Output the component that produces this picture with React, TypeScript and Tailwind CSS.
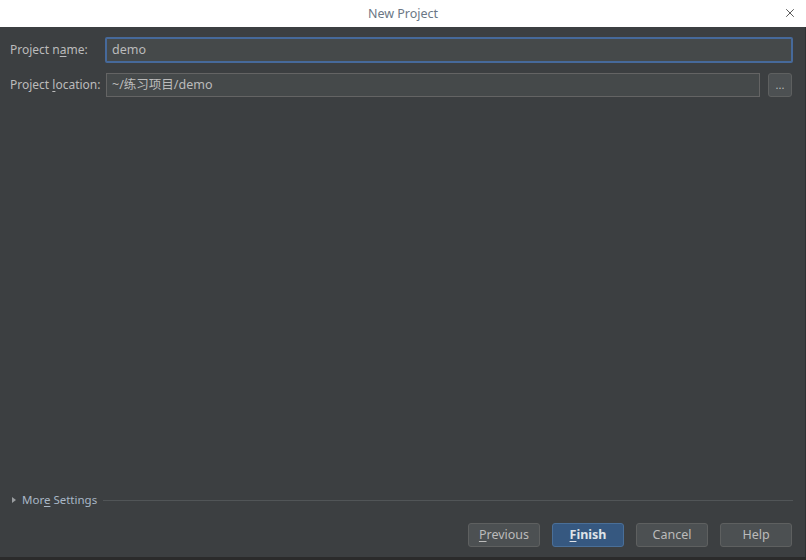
import { X } from 'lucide-react';

const font = { fontFamily: '"Noto Sans", "Noto Sans CJK SC", sans-serif' };

const DialogButton = ({ label, mnemonic, primary }: { label: string; mnemonic?: number; primary?: boolean }) => {
  const text =
    mnemonic === undefined ? (
      label
    ) : (
      <>
        {label.slice(0, mnemonic)}
        <span className="underline underline-offset-2">{label[mnemonic]}</span>
        {label.slice(mnemonic + 1)}
      </>
    );
  return (
    <button
      className={`w-[72px] h-[24px] rounded-[3px] border text-[12.5px] leading-none ${
        primary
          ? 'bg-[#365880] border-[#4a6f98] text-[#dfe3e8] font-bold'
          : 'bg-[#4c5052] border-[#5e6060] text-[#bbbbbb]'
      }`}
    >
      {text}
    </button>
  );
};

export default function App() {
  return (
    <div className="w-[806px] h-[560px] flex flex-col bg-[#3c3f41] overflow-hidden" style={font}>
      {/* Title bar */}
      <div className="h-[27px] bg-white flex items-center relative shrink-0">
        <span className="flex-1 text-center text-[12.5px] text-[#6b7785] pt-[1px]">New Project</span>
        <X size={14} strokeWidth={1.5} className="absolute right-[9px] top-[6px] text-[#444]" />
      </div>

      {/* Body */}
      <div className="flex-1 flex flex-col px-[10px] pt-[10px] pb-[10px] border-r border-[#2f3133]">
        <div className="flex items-center h-[26px]">
          <label className="w-[95px] text-[12px] text-[#bbbbbb] whitespace-nowrap">
            Project n<span className="underline underline-offset-2">a</span>me:
          </label>
          <div className="flex-1 h-[26px] rounded-[2px] border-2 border-[#46699a] bg-[#45494a] flex items-center px-[5px] mr-[2px]">
            <span className="text-[12.5px] text-[#bbbbbb]">demo</span>
          </div>
        </div>

        <div className="flex items-center h-[24px] mt-[10px]">
          <label className="w-[96px] text-[12px] text-[#bbbbbb] whitespace-nowrap">
            Project <span className="underline underline-offset-2">l</span>ocation:
          </label>
          <div className="flex-1 h-[24px] border border-[#646464] bg-[#45494a] flex items-center px-[5px]">
            <span className="text-[12.5px] text-[#bbbbbb]">~/练习项目/demo</span>
          </div>
          <button className="ml-[8px] mr-[3px] w-[24px] h-[24px] rounded-[3px] border border-[#5e6060] bg-[#4c5052] text-[11px] text-[#bbbbbb] leading-none pb-[2px]">
            ...
          </button>
        </div>

        <div className="flex-1" />

        <div className="flex items-center h-[16px]">
          <svg width="6" height="8" viewBox="0 0 6 8" className="ml-[1px] mr-[5px]">
            <path d="M1 1 L5 4 L1 7 Z" fill="#9a9da0" />
          </svg>
          <span className="text-[11.5px] text-[#a9b7c6] whitespace-nowrap">
            Mor<span className="underline underline-offset-2">e</span> Settings
          </span>
          <div className="flex-1 h-px bg-[#515557] ml-[6px] mr-[2px]" />
        </div>

        <div className="flex justify-end gap-[12px] mt-[15px] mr-[3px]">
          <DialogButton label="Previous" mnemonic={0} />
          <DialogButton label="Finish" mnemonic={0} primary />
          <DialogButton label="Cancel" />
          <DialogButton label="Help" />
        </div>
      </div>
      <div className="h-[3px] bg-[#2b2b2b] shrink-0" />
    </div>
  );
}
